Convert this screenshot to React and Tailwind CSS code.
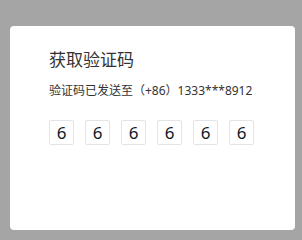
import React from 'react';

const digits = ['6', '6', '6', '6', '6', '6'];

export default function App() {
  return (
    <div
      className="w-[302px] h-[240px] bg-[#a5a5a5] pt-[26px] pl-[10px]"
      style={{ fontFamily: '"Noto Sans", "Noto Sans CJK SC", sans-serif' }}
    >
      <div className="w-[285px] h-[204px] bg-white rounded-[4px] pl-[39px] pt-[22px]">
        <h2 className="text-[17px] leading-[24px] text-[#333333]">获取验证码</h2>
        <p className="mt-[10px] text-[12px] leading-[18px] text-[#333333]">
          验证码已发送至（+86）1333***8912
        </p>
        <div className="mt-[20px] flex gap-[11px]">
          {digits.map((d, i) => (
            <div
              key={i}
              className="w-[25px] h-[25px] border border-[#e4e4e4] rounded-[2px] flex items-center justify-center text-[17px] text-[#111827]"
            >
              {d}
            </div>
          ))}
        </div>
      </div>
    </div>
  );
}
